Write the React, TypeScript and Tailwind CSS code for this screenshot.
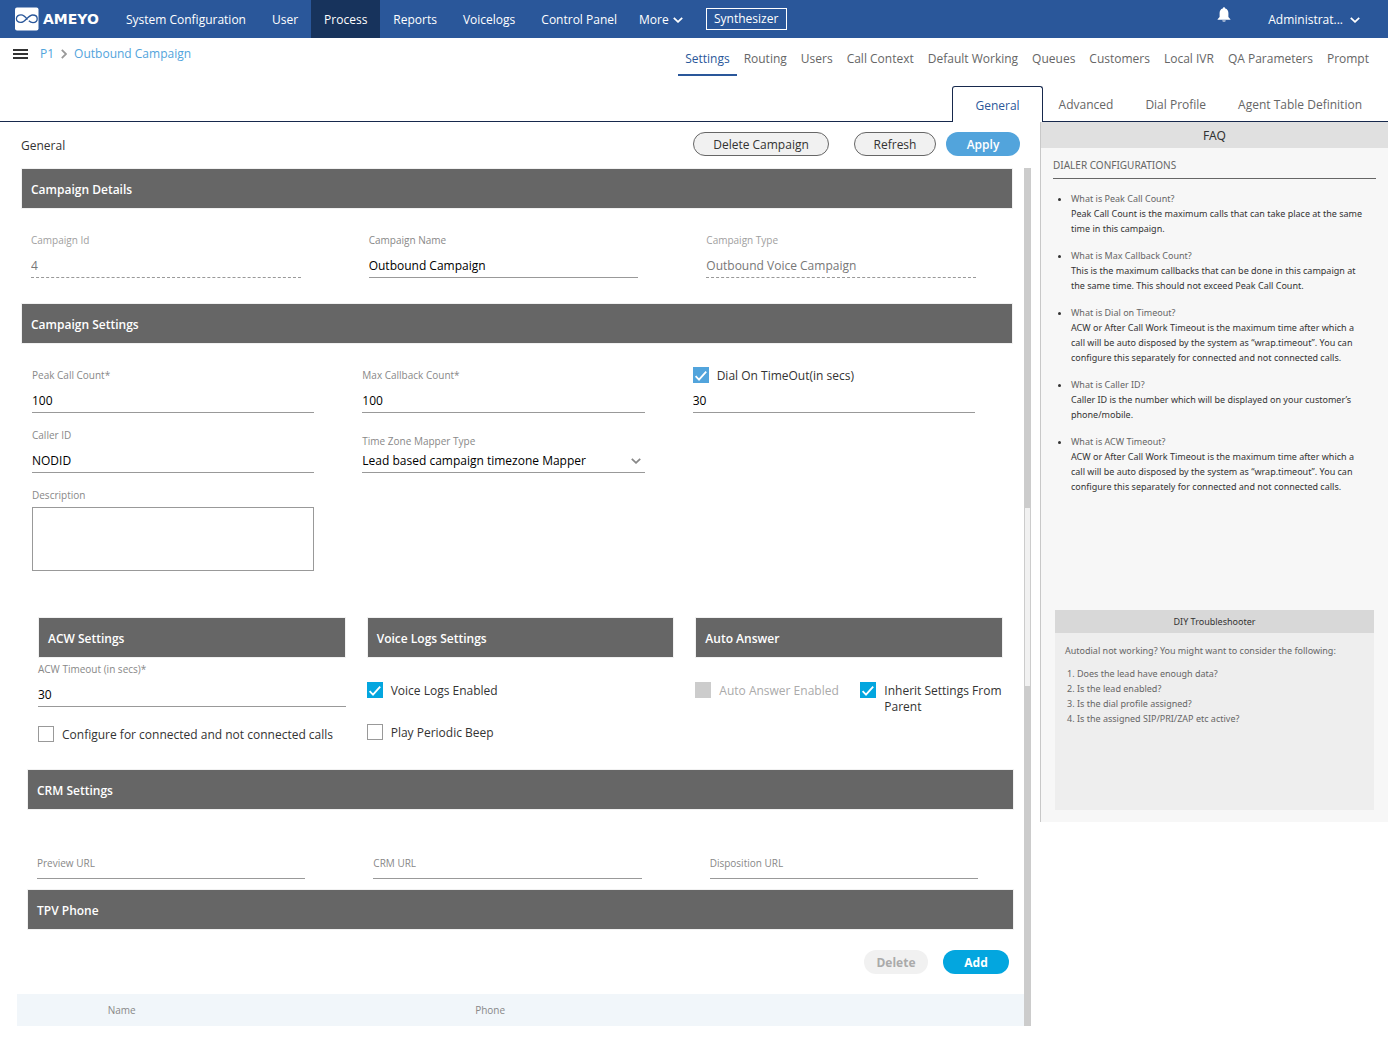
import { ReactNode, useId } from "react";

const NAV = ["System Configuration", "User", "Process", "Reports", "Voicelogs", "Control Panel"];

const SECTION_TABS = [
  "Settings", "Routing", "Users", "Call Context", "Default Working",
  "Queues", "Customers", "Local IVR", "QA Parameters", "Prompt",
];

const SUB_TABS = ["Advanced", "Dial Profile", "Agent Table Definition"];

const ACW_HELP =
  "ACW or After Call Work Timeout is the maximum time after which a call will be auto disposed by the system as “wrap.timeout”. You can configure this separately for connected and not connected calls.";

const FAQ = [
  { q: "What is Peak Call Count?", a: "Peak Call Count is the maximum calls that can take place at the same time in this campaign." },
  { q: "What is Max Callback Count?", a: "This is the maximum callbacks that can be done in this campaign at the same time. This should not exceed Peak Call Count." },
  { q: "What is Dial on Timeout?", a: ACW_HELP },
  { q: "What is Caller ID?", a: "Caller ID is the number which will be displayed on your customer’s phone/mobile." },
  { q: "What is ACW Timeout?", a: ACW_HELP },
];

const CHECKLIST = [
  "Does the lead have enough data?",
  "Is the lead enabled?",
  "Is the dial profile assigned?",
  "Is the assigned SIP/PRI/ZAP etc active?",
];

function Chevron({ className }: { className: string }) {
  return (
    <svg viewBox="0 0 10 6" className={className} fill="none" stroke="currentColor" strokeWidth="1.8" aria-hidden="true">
      <path d="M0.8 0.8 5 4.8 9.2 0.8" />
    </svg>
  );
}

function Logo() {
  return (
    <a href="#home" className="flex items-center gap-1 text-white">
      <svg viewBox="0 0 24 24" className="size-6" aria-hidden="true">
        <rect x="0" y="0.5" width="23.5" height="23" rx="2" fill="#fff" />
        <path
          d="M12.4 12.6C10 9 8 7.8 6 7.8 3.4 7.8 1.4 9.4 1.4 11.6S3.2 15.4 5.8 15.4C10.4 15.4 13 8 17.6 8 20.4 8 22.2 9.6 22.2 11.8S20.4 15.6 18 15.6C16.4 15.6 15 14.9 13.8 13.8"
          fill="none"
          stroke="#2a579a"
          strokeWidth="1.3"
        />
      </svg>
      <span className="font-[DejaVu_Sans,sans-serif] text-[14px] leading-6 font-bold">AMEYO</span>
    </a>
  );
}

function Bar({ children }: { children: ReactNode }) {
  return (
    <h2 className="flex h-[41px] items-center border border-[#f1f1f1] bg-[#666] px-[9px] pt-[3px] text-xs font-semibold text-white">
      {children}
    </h2>
  );
}

const LABEL = "text-[10px] leading-4 font-medium text-[#888]";
const LINE = "h-6 w-full border-b bg-transparent text-xs outline-none";

function Field({ label, value, disabled = false }: { label: string; value: string; disabled?: boolean }) {
  const id = useId();
  return (
    <div className="flex flex-col gap-1.5">
      <label htmlFor={id} className={`${LABEL} ${disabled ? "opacity-80" : ""}`}>{label}</label>
      <input
        id={id}
        defaultValue={value}
        disabled={disabled}
        className={`${LINE} ${disabled ? "border-dashed border-[#999] text-[#777]" : "border-[#999] text-black"}`}
      />
    </div>
  );
}

/* Empty field whose label rests on the input line. */
function RestingField({ label }: { label: string }) {
  const id = useId();
  return (
    <div className="grid">
      <label htmlFor={id} className={`col-start-1 row-start-1 ${LABEL}`}>{label}</label>
      <input id={id} className={`col-start-1 row-start-1 ${LINE} border-[#999] text-black`} />
    </div>
  );
}

type CheckProps = { label: string; checked?: boolean; disabled?: boolean; tone?: "soft" | "bright" };

function Check({ label, checked = false, disabled = false, tone = "bright" }: CheckProps) {
  const box = disabled
    ? "bg-[#ccc]"
    : tone === "soft"
      ? "border border-[#999] bg-white checked:border-[#52a4dc] checked:bg-[#52a4dc]"
      : "border border-[#999] bg-white checked:border-[#03a6df] checked:bg-[#03a6df]";
  return (
    <label className={`flex h-4 items-start gap-2 text-xs leading-4 ${disabled ? "text-[#aaa]" : "text-[#333]"}`}>
      <span className="grid size-4 shrink-0 place-items-center">
        <input
          type="checkbox"
          defaultChecked={checked}
          disabled={disabled}
          className={`peer col-start-1 row-start-1 size-4 appearance-none ${box}`}
        />
        <svg
          viewBox="0 0 16 16"
          className="pointer-events-none invisible col-start-1 row-start-1 size-4 peer-checked:visible"
          fill="none"
          stroke="#fff"
          strokeWidth="1.8"
          aria-hidden="true"
        >
          <path d="M2.6 9.2 6 12.6 13.2 4.6" />
        </svg>
      </span>
      <span className="pt-px">{label}</span>
    </label>
  );
}

function TopBar() {
  return (
    <header className="flex h-[38px] items-center bg-[#2a579a] pr-7 pl-[15px] text-xs text-white">
      <Logo />
      <nav className="ml-[14px] flex h-full items-center">
        {NAV.map((item) => (
          <a
            key={item}
            href="#nav"
            className={`flex h-full items-center px-[13px] pt-0.5 ${item === "Process" ? "bg-[#17335c]" : ""}`}
          >
            {item}
          </a>
        ))}
        <button type="button" className="flex items-center gap-1 pt-0.5 pr-2 pl-[9px]">
          More <Chevron className="h-1.5 w-2.5" />
        </button>
        <button type="button" className="ml-[15px] h-[22px] w-[81px] border border-white leading-4">
          Synthesizer
        </button>
      </nav>
      <button type="button" aria-label="Notifications" className="mb-[9px] ml-auto">
        <svg viewBox="0 0 14 15" className="h-[15px] w-3.5" fill="#fff" aria-hidden="true">
          <path d="M7 0.3C7.8 0.3 8.2 0.9 8.2 1.6 10.4 2.1 11.4 4 11.4 6V10L13.4 12.2V12.8H0.6V12.2L2.6 10V6C2.6 4 3.6 2.1 5.8 1.6 5.8 0.9 6.2 0.3 7 0.3ZM5.2 13.4H8.8C8.6 14.3 7.9 14.6 7 14.6S5.4 14.3 5.2 13.4Z" />
        </svg>
      </button>
      <button type="button" className="ml-[37px] flex items-center gap-[7px] pt-0.5">
        Administrat... <Chevron className="h-1.5 w-2.5" />
      </button>
    </header>
  );
}

function TabRows() {
  return (
    <>
      <div className="flex h-[38px] justify-between">
        <div className="flex h-8 items-center pl-[13px] text-xs text-[#52a4dc]">
          <button type="button" aria-label="Menu" className="mr-3 flex flex-col gap-[2px]">
            <span className="h-[2px] w-[15px] bg-[#333]" />
            <span className="h-[2px] w-[15px] bg-[#333]" />
            <span className="h-[2px] w-[15px] bg-[#333]" />
          </button>
          <a href="#p1">P1</a>
          <svg viewBox="0 0 6 10" className="mx-[7px] h-2.5 w-1.5" fill="none" stroke="#999" strokeWidth="1.8" aria-hidden="true">
            <path d="M0.8 0.8 5 5 0.8 9.2" />
          </svg>
          <a href="#campaign">Outbound Campaign</a>
        </div>
        <nav className="flex pr-3 text-xs font-medium text-[#666]">
          {SECTION_TABS.map((tab) => (
            <a
              key={tab}
              href="#section"
              className={`flex items-center border-b-2 px-[7px] pt-1.5 ${
                tab === "Settings" ? "border-[#2a579a] text-[#2a579a]" : "border-transparent"
              }`}
            >
              {tab}
            </a>
          ))}
        </nav>
      </div>
      <nav className="mt-[10px] flex h-9 text-xs font-medium text-[#666]">
        <span className="flex-1 border-b border-[#17294d]" />
        <a
          href="#general"
          className="flex items-center rounded-t-[3px] border border-b-0 border-[#17294d] px-[22px] pt-0.5 text-[#2a579a]"
        >
          General
        </a>
        <span className="flex items-stretch border-b border-[#17294d] pr-[10px]">
          {SUB_TABS.map((tab) => (
            <a key={tab} href="#subtab" className="flex items-center px-4 pt-0.5">
              {tab}
            </a>
          ))}
        </span>
      </nav>
    </>
  );
}

function CampaignForm() {
  const mapperId = useId();
  const descId = useId();
  return (
    <div className="flex">
      <div className="min-w-0 flex-1 pl-[17px]">
        <div className="pr-[11px] pl-1">
          <Bar>Campaign Details</Bar>
          <div className="grid grid-cols-3 gap-x-[68px] pt-[23px] pr-[37px] pb-[25px] pl-[10px]">
            <Field label="Campaign Id" value="4" disabled />
            <Field label="Campaign Name" value="Outbound Campaign" />
            <Field label="Campaign Type" value="Outbound Voice Campaign" disabled />
          </div>

          <Bar>Campaign Settings</Bar>
          <div className="grid grid-cols-3 gap-x-12 gap-y-3.5 pt-[23px] pr-[38px] pb-[46px] pl-[11px]">
            <Field label="Peak Call Count*" value="100" />
            <Field label="Max Callback Count*" value="100" />
            <div className="flex flex-col gap-1.5">
              <Check label="Dial On TimeOut(in secs)" checked tone="soft" />
              <input aria-label="Dial on timeout seconds" defaultValue="30" className={`${LINE} border-[#999] text-black`} />
            </div>
            <Field label="Caller ID" value="NODID" />
            <div className="flex flex-col justify-end">
              <label htmlFor={mapperId} className={LABEL}>Time Zone Mapper Type</label>
              <div className="grid items-center">
                <select id={mapperId} className={`col-start-1 row-start-1 appearance-none ${LINE} border-[#999] text-black`}>
                  <option>Lead based campaign timezone Mapper</option>
                </select>
                <Chevron className="pointer-events-none col-start-1 row-start-1 mr-1 h-1.5 w-2.5 justify-self-end text-[#888]" />
              </div>
            </div>
            <div className="col-start-1 flex flex-col gap-1">
              <label htmlFor={descId} className={LABEL}>Description</label>
              <textarea id={descId} className="h-16 w-full resize-none border border-[#999] text-xs outline-none" />
            </div>
          </div>
        </div>

        <div className="grid grid-cols-3 gap-x-[21px] pr-[21px] pb-[27px] pl-[21px]">
          <section>
            <Bar>ACW Settings</Bar>
            <div className="pt-[3px] pb-[19px]">
              <Field label="ACW Timeout (in secs)*" value="30" />
            </div>
            <Check label="Configure for connected and not connected calls" />
          </section>
          <section>
            <Bar>Voice Logs Settings</Bar>
            <div className="flex flex-col gap-[26px] pt-6">
              <Check label="Voice Logs Enabled" checked />
              <Check label="Play Periodic Beep" />
            </div>
          </section>
          <section>
            <Bar>Auto Answer</Bar>
            <div className="flex pt-6">
              <div className="w-[165px] shrink-0">
                <Check label="Auto Answer Enabled" disabled />
              </div>
              <Check label="Inherit Settings From Parent" checked />
            </div>
          </section>
        </div>

        <div className="pr-[10px] pl-[10px]">
          <Bar>CRM Settings</Bar>
          <div className="grid grid-cols-3 gap-x-[68px] pt-[45px] pr-9 pb-[10px] pl-[10px]">
            <RestingField label="Preview URL" />
            <RestingField label="CRM URL" />
            <RestingField label="Disposition URL" />
          </div>
          <Bar>TPV Phone</Bar>
          <div className="flex justify-end gap-[15px] py-5 pr-[5px] text-xs font-bold">
            <button type="button" disabled className="h-6 w-16 rounded-full bg-[#f1f1f1] pt-px text-[#aaa]">
              Delete
            </button>
            <button type="button" className="h-6 w-[66px] rounded-full bg-[#03a6df] pt-px text-white">
              Add
            </button>
          </div>
        </div>

        <table className="w-full table-fixed bg-[#f1f6fa]">
          <thead>
            <tr className="h-8 text-left text-[10px] text-[#888]">
              <td className="w-[9%]" />
              <th scope="col" className="w-[36%] font-medium">Name</th>
              <th scope="col" className="pl-[5px] font-medium">Phone</th>
            </tr>
          </thead>
        </table>
      </div>

      <div className="flex w-[7px] flex-col bg-[#ccc]" aria-hidden="true">
        <div className="h-[339px]" />
        <div className="h-[180px] border border-[#ccc] bg-[#f1f1f1]" />
      </div>
    </div>
  );
}

function HelpPanel() {
  return (
    <aside className="flex h-[700px] w-[348px] shrink-0 flex-col border-l border-[#c8c8c8] bg-[#f7f7f7] font-['Noto_Sans','Open_Sans',sans-serif] text-[9px] leading-[15px] text-[#333]">
      <h2 className="bg-[#e0e0e0] pt-px text-center text-xs leading-[25px]">FAQ</h2>
      <h3 className="mx-3 border-b border-[#666] pt-[10px] pb-[5px] text-[10px] text-[#666]">DIALER CONFIGURATIONS</h3>
      <ul className="flex list-disc flex-col gap-3 pt-3 pr-[22px] pl-[30px]">
        {FAQ.map(({ q, a }) => (
          <li key={q}>
            <span className="text-[#666]">{q}</span>
            <p>{a}</p>
          </li>
        ))}
      </ul>
      <section className="mx-3.5 mt-auto mb-3 h-[200px] bg-[#eee] text-[#666]">
        <h3 className="bg-[#d8d8d8] text-center leading-[23px] text-[#333]">DIY Troubleshooter</h3>
        <div className="px-[10px] pt-[10px]">
          <p>Autodial not working? You might want to consider the following:</p>
          <ol className="list-decimal pt-2 pl-3">
            {CHECKLIST.map((item) => (
              <li key={item}>{item}</li>
            ))}
          </ol>
        </div>
      </section>
    </aside>
  );
}

export default function App() {
  return (
    <div className="min-h-screen bg-white font-['Open_Sans','Noto_Sans',sans-serif] text-[#333]">
      <TopBar />
      <TabRows />
      <div className="flex items-start">
        <main className="min-w-0 flex-1 pr-[9px]">
          <div className="flex h-[46px] items-start pt-[10px] text-xs">
            <h1 className="mr-auto pt-0.5 pl-[21px] leading-6">General</h1>
            <button type="button" className="mr-[25px] h-6 w-[136px] rounded-full border border-[#666] bg-[#f1f1f1] pt-0.5 font-medium">
              Delete Campaign
            </button>
            <button type="button" className="mr-[10px] h-6 w-[82px] rounded-full border border-[#666] bg-[#f1f1f1] pt-0.5 font-medium">
              Refresh
            </button>
            <button type="button" className="mr-[11px] h-6 w-[74px] rounded-full bg-[#52a4dc] pt-0.5 font-semibold text-white">
              Apply
            </button>
          </div>
          <CampaignForm />
        </main>
        <HelpPanel />
      </div>
    </div>
  );
}
